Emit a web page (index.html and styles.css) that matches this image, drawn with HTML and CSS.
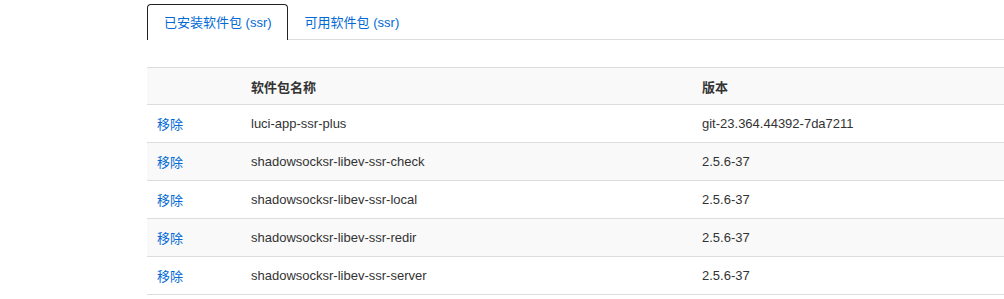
FILE: index.html
```html
<!DOCTYPE html>
<html lang="zh-CN">
<head>
    <meta charset="UTF-8">
    <title>软件包</title>
    <link rel="stylesheet" href="styles.css">
</head>
<body>
    <div class="page">
        <ul class="tabs">
            <li class="tab active"><a href="#">已安装软件包 (ssr)</a></li>
            <li class="tab"><a href="#">可用软件包 (ssr)</a></li>
        </ul>

        <table class="pkg-table">
            <thead>
                <tr>
                    <th class="col-action"></th>
                    <th class="col-name">软件包名称</th>
                    <th>版本</th>
                </tr>
            </thead>
            <tbody>
                <tr>
                    <td><a href="#">移除</a></td>
                    <td>luci-app-ssr-plus</td>
                    <td>git-23.364.44392-7da7211</td>
                </tr>
                <tr>
                    <td><a href="#">移除</a></td>
                    <td>shadowsocksr-libev-ssr-check</td>
                    <td>2.5.6-37</td>
                </tr>
                <tr>
                    <td><a href="#">移除</a></td>
                    <td>shadowsocksr-libev-ssr-local</td>
                    <td>2.5.6-37</td>
                </tr>
                <tr>
                    <td><a href="#">移除</a></td>
                    <td>shadowsocksr-libev-ssr-redir</td>
                    <td>2.5.6-37</td>
                </tr>
                <tr>
                    <td><a href="#">移除</a></td>
                    <td>shadowsocksr-libev-ssr-server</td>
                    <td>2.5.6-37</td>
                </tr>
            </tbody>
        </table>
    </div>
</body>
</html>
```

FILE: styles.css
```css
:root {
    --text-color: #333333;
    --link-color: #0069d6;
    --border-color: #dddddd;
    --stripe-bg: #f9f9f9;
}

body {
    margin: 0;
    font-family: 'Liberation Sans', Arial, 'Noto Sans CJK SC', sans-serif;
    font-size: 13px;
    color: var(--text-color);
    background: #ffffff;
    overflow: hidden;
}

a {
    color: var(--link-color);
    text-decoration: none;
}

.page {
    padding: 4px 0 0 147px;
}

/* --- Tabs --- */

.tabs {
    list-style: none;
    margin: 0 0 27px;
    padding: 0;
    display: flex;
    border-bottom: 1px solid var(--border-color);
    height: 35px;
}

.tab {
    margin-bottom: -1px;
}

.tab a {
    display: block;
    height: 35px;
    line-height: 35px;
    padding: 0 15px 0 16px;
    border: 1px solid transparent;
    border-bottom: none;
    border-radius: 4px 4px 0 0;
    box-sizing: border-box;
}

.tab.active a {
    border-color: #222222;
    background: #ffffff;
    height: 36px;
}

/* --- Table --- */

.pkg-table {
    width: 100%;
    border-collapse: collapse;
    border-top: 1px solid var(--border-color);
}

.pkg-table th,
.pkg-table td {
    height: 38px;
    padding: 0 10px;
    text-align: left;
    vertical-align: middle;
    border-bottom: 1px solid var(--border-color);
    box-sizing: border-box;
}

.pkg-table th {
    font-weight: bold;
    height: 37px;
}

.pkg-table thead tr {
    background: var(--stripe-bg);
}

.pkg-table tbody tr:nth-child(even) {
    background: var(--stripe-bg);
}

.col-action {
    width: 94px;
}

.col-name {
    width: 451px;
}
```
